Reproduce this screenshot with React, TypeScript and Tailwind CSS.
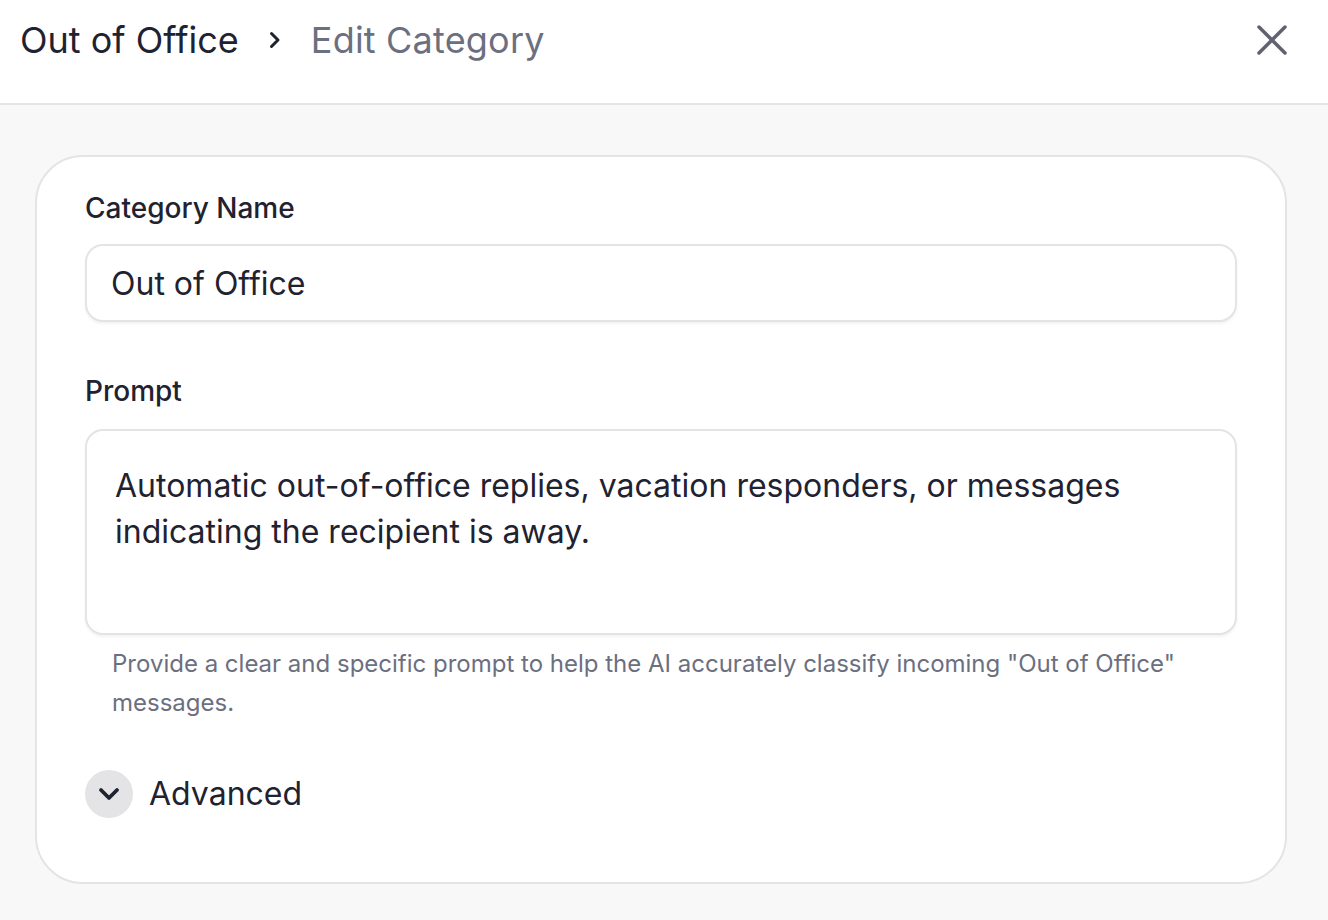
import { useState } from "react";

function ChevronRight() {
  return (
    <svg width="16" height="20" viewBox="0 0 16 20" fill="none" className="text-[#1f2230]">
      <path d="M4.5 3.5 11 10l-6.5 6.5" stroke="currentColor" strokeWidth="3" strokeLinecap="round" strokeLinejoin="round" />
    </svg>
  );
}

function CloseIcon() {
  return (
    <svg width="32" height="32" viewBox="0 0 32 32" fill="none" className="text-[#60636f]">
      <path d="M3 3 29 29M29 3 3 29" stroke="currentColor" strokeWidth="3.5" strokeLinecap="round" />
    </svg>
  );
}

function ChevronDown() {
  return (
    <svg width="26" height="18" viewBox="0 0 26 18" fill="none" className="text-[#1f2230]">
      <path d="M5 5l8 8 8-8" stroke="currentColor" strokeWidth="3.8" strokeLinecap="round" strokeLinejoin="round" />
    </svg>
  );
}

export default function App() {
  const [name, setName] = useState("Out of Office");
  const [prompt, setPrompt] = useState(
    "Automatic out-of-office replies, vacation responders, or messages indicating the recipient is away."
  );

  return (
    <div
      className="flex h-[920px] flex-col overflow-hidden bg-[#f8f8f9] text-[#1f2230]"
      style={{ fontFamily: "Inter, 'Noto Sans', sans-serif" }}
    >
      {/* header */}
      <div className="flex h-[105px] shrink-0 items-start justify-between border-b-2 border-[#e4e4e7] bg-white pl-[20px] pr-[40px] pt-[19px]">
        <div className="flex items-center">
          <span className="text-[36px] leading-[42px] text-[#1f2230]">Out of Office</span>
          <span className="ml-[28px] mr-[28px] flex items-center">
            <ChevronRight />
          </span>
          <span className="text-[36px] leading-[42px] tracking-[0.2px] text-[#6b6f80]">Edit Category</span>
        </div>
        <button className="mt-[5px] flex h-[32px] w-[32px] items-center justify-center">
          <CloseIcon />
        </button>
      </div>

      {/* body */}
      <div className="pl-[35px] pr-[41px] pt-[50px]">
        <div className="rounded-[48px] border-2 border-[#e4e4e7] bg-white px-[48px] pb-[64px] pt-[31px]">
          <label className="block text-[28px] font-medium leading-[40px] text-[#1f2230]">Category Name</label>
          <input
            value={name}
            onChange={(e) => setName(e.target.value)}
            className="mt-[16px] block h-[78px] w-full rounded-[18px] border-2 border-[#e4e4e7] bg-white px-[24px] text-[32px] text-[#1f2230] shadow-[0_2px_3px_rgba(0,0,0,0.05)] outline-none"
            style={{ fontFamily: "Inter, 'Noto Sans', sans-serif" }}
          />

          <label className="mt-[49px] block text-[28px] font-medium leading-[40px] text-[#1f2230]">Prompt</label>
          <textarea
            value={prompt}
            onChange={(e) => setPrompt(e.target.value)}
            className="mt-[18px] block h-[206px] w-full resize-none rounded-[18px] border-2 border-[#e4e4e7] bg-white px-[28px] pt-[32px] text-[32px] leading-[46px] text-[#1f2230] shadow-[0_2px_3px_rgba(0,0,0,0.05)] outline-none"
            style={{ fontFamily: "Inter, 'Noto Sans', sans-serif" }}
          />
          <p className="mt-[9px] pl-[27px] pr-[40px] text-[24px] leading-[39px] text-[#6b6f80]">
            Provide a clear and specific prompt to help the AI accurately classify incoming "Out of Office" messages.
          </p>

          <button className="mt-[48px] flex items-center gap-[16px]">
            <span className="flex h-[48px] w-[48px] items-center justify-center rounded-full bg-[#e4e4e7]">
              <ChevronDown />
            </span>
            <span className="text-[32px] leading-[48px] text-[#1f2230]">Advanced</span>
          </button>
        </div>
      </div>
    </div>
  );
}
